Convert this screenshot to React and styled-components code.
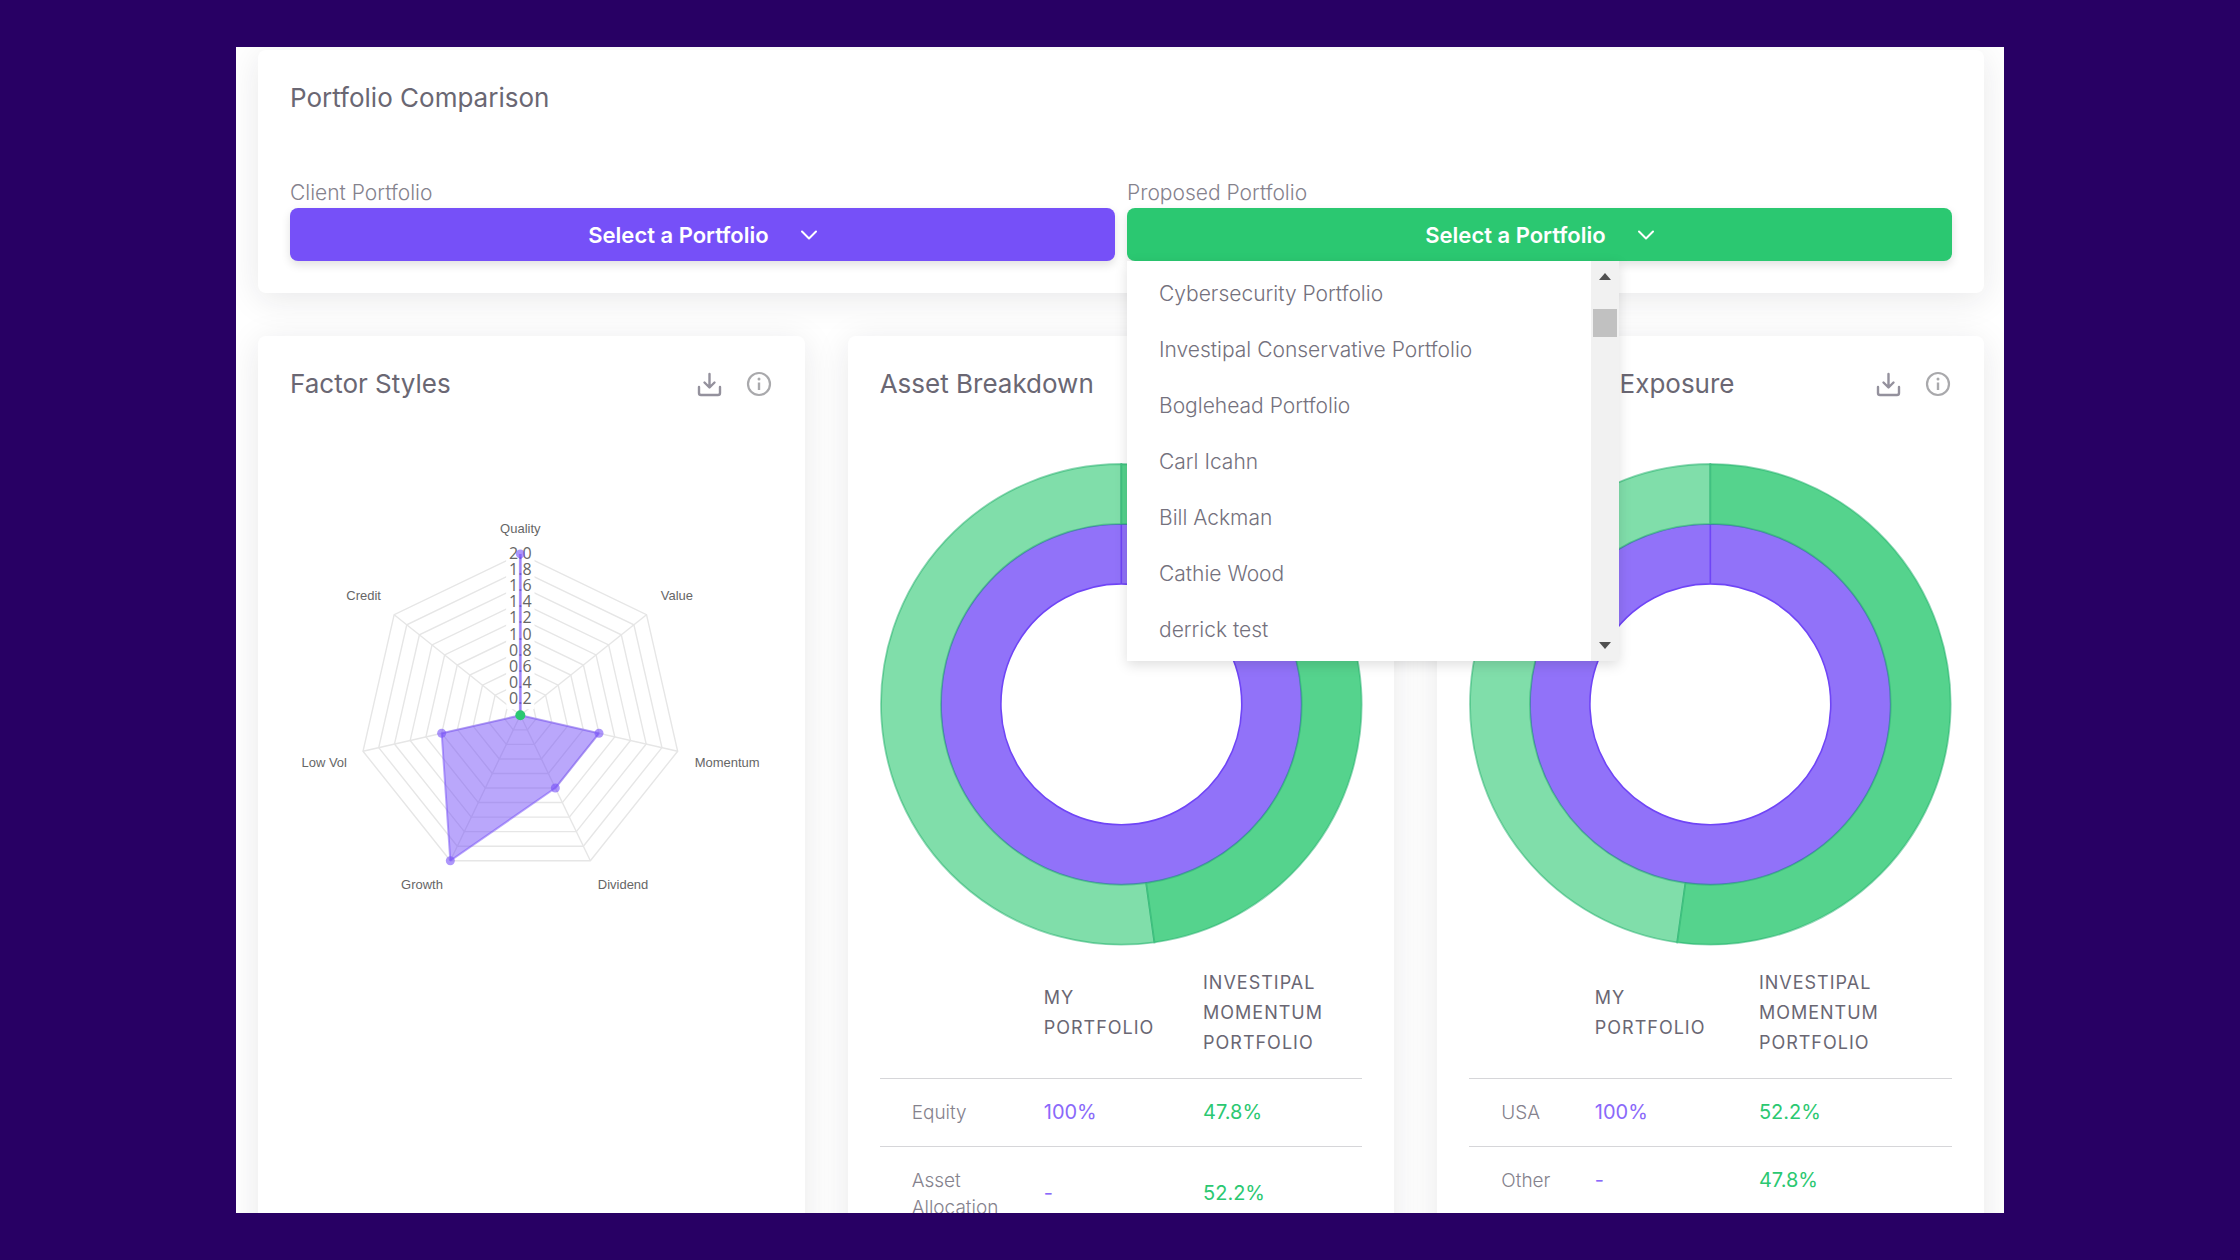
import React from "react";
import styled, { createGlobalStyle } from "styled-components";

const color = {
  backdrop: "#280064",
  violet: "#7650f8",
  green: "#2bc871",
  heading: "#6a6773",
  option: "#74717d",
  body: "#85828d",
};

const GlobalStyle = createGlobalStyle`
  *, *::before, *::after { box-sizing: border-box; }
  body {
    margin: 0;
    background: ${color.backdrop};
    font-family: Inter, "Open Sans", sans-serif;
    color: ${color.body};
  }
  h1, h2, ul { margin: 0; padding: 0; font-weight: 400; }
  ul { list-style: none; }
  button { font: inherit; border: 0; background: none; padding: 0; cursor: pointer; }
`;

const Page = styled.div`
  height: 100vh;
  padding: 47px 236px;
`;

const Frame = styled.main`
  height: 100%;
  overflow: hidden;
  background: #fff;
  display: flex;
  flex-direction: column;
  gap: 43px;
  padding: 3px 20px 0 22px;
`;

const Card = styled.section`
  flex: none;
  min-width: 0;
  padding: 32px;
  background: #fff;
  border-radius: 8px;
  box-shadow: 0 6px 34px rgba(34, 34, 40, 0.1);
`;

const CardRow = styled.div`
  flex: none;
  display: grid;
  grid-template-columns: repeat(3, minmax(0, 1fr));
  gap: 43px;
`;

const CardHeader = styled.header`
  display: flex;
  align-items: center;
  justify-content: space-between;
  margin-bottom: 63px;
`;

const Title = styled.h2`
  font-size: 26px;
  line-height: 32px;
  color: ${color.heading};
  white-space: nowrap;
`;

const Actions = styled.div`
  display: flex;
  gap: 22px;
`;

const IconButton = styled.button`
  display: flex;
  color: ${(p) => p.$tone};
`;

const Pickers = styled.div`
  display: grid;
  grid-template-columns: 1fr 1fr;
  gap: 12px;
`;

const Picker = styled.div`
  position: relative;
  display: flex;
  flex-direction: column;
`;

const PickerLabel = styled.label`
  font-size: 21px;
  line-height: 30px;
  font-weight: 300;
`;

const PickerButton = styled.button`
  height: 53px;
  display: flex;
  align-items: center;
  justify-content: center;
  gap: 32px;
  border-radius: 8px;
  background: ${(p) => p.$fill};
  color: #fff;
  font-size: 22px;
  font-weight: 600;
  box-shadow: 0 4px 10px rgba(0, 0, 0, 0.12);
`;

const Menu = styled.div`
  position: absolute;
  top: 100%;
  left: 0;
  z-index: 2;
  width: 492px;
  height: 400px;
  display: flex;
  background: #fff;
  box-shadow: 0 4px 12px rgba(0, 0, 0, 0.13);
`;

const Options = styled.ul`
  flex: 1;
  padding-top: 5px;
`;

const Option = styled.li`
  padding: 0 32px;
  font-size: 21px;
  line-height: 56px;
  font-weight: 300;
  color: ${color.option};
`;

const Scrollbar = styled.div`
  width: 28px;
  display: flex;
  flex-direction: column;
  align-items: center;
  padding: 12px 0;
  background: #f1f1f1;
`;

const Arrow = styled.span`
  border: 6px solid transparent;
  border-width: ${(p) => (p.$up ? "0 6px 7px" : "7px 6px 0")};
  border-top-color: ${(p) => (p.$up ? "transparent" : "#505050")};
  border-bottom-color: ${(p) => (p.$up ? "#505050" : "transparent")};
`;

const Thumb = styled.span`
  width: 24px;
  height: 28px;
  margin: 29px 0 auto;
  background: #c1c1c1;
`;

const Chart = styled.svg`
  display: block;
  width: 100%;
  overflow: visible;
`;

const Table = styled.table`
  width: 100%;
  table-layout: fixed;
  border-collapse: collapse;
  text-align: left;

  tbody tr { border-top: 1px solid #d6d6d9; }
`;

const HeadCell = styled.th`
  padding: 22px 32px 20px 0;
  font-size: 18px;
  line-height: 30px;
  font-weight: 400;
  letter-spacing: 1px;
  text-transform: uppercase;
  color: ${color.heading};
`;

const NameCell = styled.th`
  padding: 20px 0 20px 32px;
  font-size: 19px;
  line-height: 27px;
  font-weight: 300;
`;

const ValueCell = styled.td`
  padding: 0;
  font-size: 20px;
  line-height: 27px;
  color: ${(p) => p.$tone};
`;

const Chevron = () => (
  <svg width="16" height="10" viewBox="0 0 16 10" fill="none" stroke="currentColor" strokeWidth="2" strokeLinecap="round" strokeLinejoin="round" aria-hidden="true">
    <path d="M1 1.5 8 8.5 15 1.5" />
  </svg>
);

const DownloadIcon = () => (
  <svg width="28" height="28" viewBox="0 0 28 28" fill="none" stroke="currentColor" strokeWidth="2.4" strokeLinecap="round" strokeLinejoin="round" aria-hidden="true">
    <path d="M14.500 4V17M9.500 12.500 14.500 17.500 19.500 12.500M4 17v6q0 2 2 2h17q2 0 2-2V17" />
  </svg>
);

const InfoIcon = () => (
  <svg width="28" height="28" viewBox="0 0 28 28" fill="none" stroke="currentColor" strokeWidth="2.2" aria-hidden="true">
    <circle cx="14" cy="14" r="11" />
    <path d="M14 12.500V20" strokeWidth="2.400" />
    <circle cx="14" cy="9" r="1.500" fill="currentColor" stroke="none" />
  </svg>
);

function PanelHeader({ title }) {
  return (
    <CardHeader>
      <Title>{title}</Title>
      <Actions>
        <IconButton $tone="#94919d" aria-label={`Download ${title}`}>
          <DownloadIcon />
        </IconButton>
        <IconButton $tone="#a9a9ac" aria-label={`About ${title}`}>
          <InfoIcon />
        </IconButton>
      </Actions>
    </CardHeader>
  );
}

const RADAR = { cx: 230.5, cy: 252.5, r: 161.5, max: 2 };

const factors = [
  { name: "Quality", value: 2, x: 230.5, y: 70, anchor: "middle" },
  { name: "Value", value: 0, x: 371, y: 137, anchor: "start" },
  { name: "Momentum", value: 1, x: 405, y: 304, anchor: "start" },
  { name: "Dividend", value: 1, x: 308, y: 426, anchor: "start" },
  { name: "Growth", value: 2, x: 153, y: 426, anchor: "end" },
  { name: "Low Vol", value: 1, x: 57, y: 304, anchor: "end" },
  { name: "Credit", value: 0, x: 91, y: 137, anchor: "end" },
];

const ticks = [0.2, 0.4, 0.6, 0.8, 1, 1.2, 1.4, 1.6, 1.8, 2];

const radarPoint = (index, value) => {
  const angle = (index / factors.length) * 2 * Math.PI;
  const radius = (value / RADAR.max) * RADAR.r;
  return [RADAR.cx + radius * Math.sin(angle), RADAR.cy - radius * Math.cos(angle)];
};

const polygon = (values) => values.map((v, i) => radarPoint(i, v).join(",")).join(" ");

function RadarChart() {
  return (
    <Chart viewBox="0 0 483 483" role="img" aria-label="Factor styles radar">
      <g fill="none" stroke="#e6e6e6" strokeWidth="1.4">
        {ticks.map((t) => (
          <polygon key={t} points={polygon(factors.map(() => t))} />
        ))}
        {factors.map((f, i) => {
          const [x, y] = radarPoint(i, RADAR.max);
          return <line key={f.name} x1={RADAR.cx} y1={RADAR.cy} x2={x} y2={y} />;
        })}
      </g>
      <g fill="#fff">
        {ticks.map((t) => {
          const [x, y] = radarPoint(0, t);
          return <rect key={t} x={x - 14} y={y - 11} width="28" height="21" />;
        })}
      </g>
      <g fontFamily='"Open Sans", "Noto Sans", sans-serif' fontSize="16" fill="#666" textAnchor="middle">
        {ticks.map((t) => {
          const [x, y] = radarPoint(0, t);
          return <text key={t} x={x} y={y + 5}>{t.toFixed(1)}</text>;
        })}
      </g>
      <g fontFamily='"Liberation Sans", Arial, sans-serif' fontSize="13" fill="#666">
        {factors.map((f) => (
          <text key={f.name} x={f.x} y={f.y} textAnchor={f.anchor}>{f.name}</text>
        ))}
      </g>
      <polygon
        points={polygon(factors.map((f) => f.value))}
        fill={color.violet}
        fillOpacity="0.5"
        stroke={color.violet}
        strokeOpacity="0.5"
        strokeWidth="2"
        strokeLinejoin="bevel"
      />
      <line
        x1={RADAR.cx}
        y1={RADAR.cy}
        x2={RADAR.cx}
        y2={RADAR.cy - RADAR.r}
        stroke={color.violet}
        strokeOpacity="0.4"
        strokeWidth="3"
      />
      {factors.map((f, i) => {
        const [x, y] = radarPoint(i, f.value);
        return f.value > 0 && <circle key={f.name} cx={x} cy={y} r="4.500" fill={color.violet} fillOpacity="0.6" />;
      })}
      <circle cx={RADAR.cx} cy={RADAR.cy} r="5" fill={color.green} />
    </Chart>
  );
}

const ringPath = (from, to, inner, outer) => {
  const at = (share, r) => {
    const a = share * 2 * Math.PI;
    return `${241.5 + r * Math.sin(a)} ${241.5 - r * Math.cos(a)}`;
  };
  const large = to - from > 0.5 ? 1 : 0;
  return `M${at(from, outer)}A${outer} ${outer} 0 ${large} 1 ${at(to, outer)}L${at(to, inner)}A${inner} ${inner} 0 ${large} 0 ${at(from, inner)}Z`;
};

function DonutChart({ share, label }) {
  return (
    <Chart viewBox="0 0 483 483" role="img" aria-label={label}>
      <path d={ringPath(0, 0.99999, 120.5, 180.5)} fill="#9172f9" stroke="#6f45f6" strokeWidth="1.600" />
      <g stroke="#22b06b" strokeOpacity="0.5" strokeWidth="1.800">
        <path d={ringPath(share, 1, 180.5, 240.5)} fill="#80deaa" />
        <path d={ringPath(0, share, 180.5, 240.5)} fill="#55d38d" />
      </g>
    </Chart>
  );
}

function BreakdownTable({ rows, columns }) {
  return (
    <Table>
      <colgroup>
        {columns.map((width, i) => (
          <col key={i} style={{ width }} />
        ))}
      </colgroup>
      <thead>
        <tr>
          <td />
          <HeadCell scope="col">My Portfolio</HeadCell>
          <HeadCell scope="col">Investipal Momentum Portfolio</HeadCell>
        </tr>
      </thead>
      <tbody>
        {rows.map(([name, mine, proposed]) => (
          <tr key={name}>
            <NameCell scope="row">{name}</NameCell>
            <ValueCell $tone="#8a69fa">{mine}</ValueCell>
            <ValueCell $tone={color.green}>{proposed}</ValueCell>
          </tr>
        ))}
      </tbody>
    </Table>
  );
}

const portfolios = [
  "Cybersecurity Portfolio",
  "Investipal Conservative Portfolio",
  "Boglehead Portfolio",
  "Carl Icahn",
  "Bill Ackman",
  "Cathie Wood",
  "derrick test",
];

const ComparisonCard = styled(Card)`
  position: relative;
  z-index: 1;

  ${Title} { margin-bottom: 64px; }
`;

export default function App() {
  return (
    <Page>
      <GlobalStyle />
      <Frame>
        <ComparisonCard>
          <Title as="h1">Portfolio Comparison</Title>
          <Pickers>
            <Picker>
              <PickerLabel htmlFor="client">Client Portfolio</PickerLabel>
              <PickerButton id="client" $fill={color.violet} aria-haspopup="listbox">
                Select a Portfolio
                <Chevron />
              </PickerButton>
            </Picker>
            <Picker>
              <PickerLabel htmlFor="proposed">Proposed Portfolio</PickerLabel>
              <PickerButton id="proposed" $fill={color.green} aria-haspopup="listbox" aria-expanded="true">
                Select a Portfolio
                <Chevron />
              </PickerButton>
              <Menu>
                <Options role="listbox" aria-label="Proposed Portfolio">
                  {portfolios.map((name) => (
                    <Option key={name} role="option">{name}</Option>
                  ))}
                </Options>
                <Scrollbar aria-hidden="true">
                  <Arrow $up />
                  <Thumb />
                  <Arrow />
                </Scrollbar>
              </Menu>
            </Picker>
          </Pickers>
        </ComparisonCard>
        <CardRow>
          <Card>
            <PanelHeader title="Factor Styles" />
            <RadarChart />
          </Card>
          <Card>
            <PanelHeader title="Asset Breakdown" />
            <DonutChart share={0.478} label="Asset breakdown" />
            <BreakdownTable
              columns={["34%", "33%", "33%"]}
              rows={[
                ["Equity", "100%", "47.8%"],
                ["Asset Allocation", "-", "52.2%"],
              ]}
            />
          </Card>
          <Card>
            <PanelHeader title="Geographic Exposure" />
            <DonutChart share={0.522} label="Geographic exposure" />
            <BreakdownTable
              columns={["26%", "34%", "40%"]}
              rows={[
                ["USA", "100%", "52.2%"],
                ["Other", "-", "47.8%"],
              ]}
            />
          </Card>
        </CardRow>
      </Frame>
    </Page>
  );
}
